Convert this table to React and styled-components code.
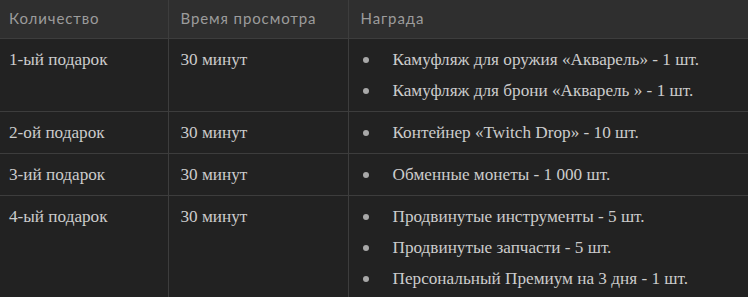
import React from "react";
import styled, { createGlobalStyle } from "styled-components";

const GlobalStyle = createGlobalStyle`
  html, body {
    margin: 0;
    padding: 0;
    background: #222222;
  }
`;

const rewards = [
  {
    gift: "1-ый подарок",
    time: "30 минут",
    items: [
      "Камуфляж для оружия «Акварель» - 1 шт.",
      "Камуфляж для брони «Акварель » - 1 шт.",
    ],
  },
  {
    gift: "2-ой подарок",
    time: "30 минут",
    items: ["Контейнер «Twitch Drop» - 10 шт."],
  },
  {
    gift: "3-ий подарок",
    time: "30 минут",
    items: ["Обменные монеты - 1 000 шт."],
  },
  {
    gift: "4-ый подарок",
    time: "30 минут",
    items: [
      "Продвинутые инструменты - 5 шт.",
      "Продвинутые запчасти - 5 шт.",
      "Персональный Премиум на 3 дня - 1 шт.",
    ],
  },
];

function App() {
  return (
    <>
      <GlobalStyle />
      <Table>
        <colgroup>
          <col style={{ width: 168 }} />
          <col style={{ width: 180 }} />
          <col />
        </colgroup>
        <thead>
          <tr>
            <HeadCell>Количество</HeadCell>
            <HeadCell>Время просмотра</HeadCell>
            <HeadCell>Награда</HeadCell>
          </tr>
        </thead>
        <tbody>
          {rewards.map((r) => (
            <Row key={r.gift}>
              <Cell>{r.gift}</Cell>
              <Cell>{r.time}</Cell>
              <Cell>
                <RewardList>
                  {r.items.map((item) => (
                    <RewardItem key={item}>{item}</RewardItem>
                  ))}
                </RewardList>
              </Cell>
            </Row>
          ))}
        </tbody>
      </Table>
    </>
  );
}

export default App;

const Table = styled.table`
  width: 748px;
  border-collapse: collapse;
  table-layout: fixed;
  background: #222222;
`;

const HeadCell = styled.th`
  background: #2f2f2f;
  color: #9c9c9c;
  font-family: Lato, "Open Sans", sans-serif;
  font-weight: 400;
  font-size: 15px;
  letter-spacing: 0.9px;
  line-height: 20px;
  text-align: left;
  padding: 8px 12px 10px;
  border-left: 1px solid #3d3d3d;
  border-bottom: 1px solid #3d3d3d;

  &:first-child {
    border-left: none;
    padding-left: 9px;
  }
`;

const Row = styled.tr`
  border-bottom: 1px solid #3d3d3d;
`;

const Cell = styled.td`
  vertical-align: top;
  color: #cccccc;
  font-family: "Liberation Serif", "DejaVu Serif", serif;
  font-size: 17.2px;
  line-height: 21px;
  padding: 10px 12px;
  border-left: 1px solid #3d3d3d;

  &:first-child {
    border-left: none;
    padding-left: 9px;
  }
`;

const RewardList = styled.ul`
  list-style: none;
  margin: 0;
  padding: 0;
`;

const RewardItem = styled.li`
  display: flex;
  align-items: center;
  gap: 24px;

  & + & {
    margin-top: 10px;
  }

  &::before {
    content: "";
    flex: none;
    width: 6px;
    height: 6px;
    margin-left: 2px;
    border-radius: 50%;
    background: #a8a8a8;
  }
`;
